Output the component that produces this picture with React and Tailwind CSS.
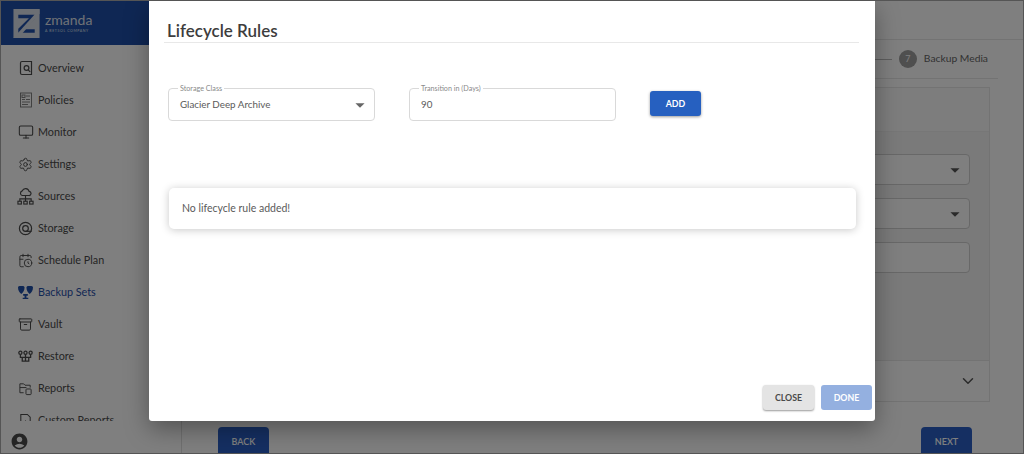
import { Monitor, Settings, CalendarClock, Archive, ChevronDown } from "lucide-react";
import { MdAccountCircle, MdArrowDropDown } from "react-icons/md";

const FONT = "font-['Lato','Noto_Sans',sans-serif]";

function OverviewIcon() {
  return (
    <svg viewBox="0 0 16 16" className="h-[16px] w-[16px]" fill="none" stroke="currentColor" strokeWidth="1.2">
      <path d="M4 1.500h9.500v13H4a1.500 1.500 0 0 1-1.500-1.500V3A1.500 1.500 0 0 1 4 1.500z" />
      <circle cx="8.500" cy="8" r="2.400" />
      <path d="M10.200 9.800l2 2" />
    </svg>
  );
}

function PoliciesIcon() {
  return (
    <svg viewBox="0 0 16 16" className="h-[16px] w-[16px] text-[#777]" fill="none" stroke="currentColor" strokeWidth="0.9">
      <rect x="2.500" y="1" width="11" height="14" />
      <rect x="4" y="3" width="3" height="2.500" />
      <path d="M8 4h4M4 7.500h3M8 7.500h4M4 10h8M4 12.500h6" />
    </svg>
  );
}

function SourcesIcon() {
  return (
    <svg viewBox="0 0 18 18" className="h-[17px] w-[17px]" fill="none" stroke="currentColor" strokeWidth="1.200">
      <path d="M5.500 8h7a2.200 2.200 0 0 0 .3-4.400A3.800 3.800 0 0 0 5.600 3 2.600 2.600 0 0 0 5.500 8z" />
      <path d="M9 8v3M3 14v-2.500h12V14M9 11v3" />
      <rect x="1" y="14" width="3.600" height="3" />
      <rect x="7.200" y="14" width="3.600" height="3" />
      <rect x="13.400" y="14" width="3.600" height="3" />
    </svg>
  );
}

function StorageIcon() {
  return (
    <svg viewBox="0 0 16 16" className="h-[15px] w-[15px]" fill="none" stroke="currentColor" strokeWidth="1.300">
      <circle cx="8" cy="8" r="6.500" />
      <circle cx="8" cy="8" r="3" />
      <path d="M8 11h6.500" />
    </svg>
  );
}

function BackupIcon() {
  return (
    <svg viewBox="0 0 18 16" className="h-[15px] w-[17px]" fill="currentColor">
      <path d="M1 2.500A2 2 0 0 1 3 1h3a2 2 0 0 1 2 1.500C8 6 6.500 8 4.500 9.500 2.500 8 1 6 1 2.500z" />
      <path d="M10 2.500A2 2 0 0 1 12 1h3a2 2 0 0 1 2 1.500c0 3.500-1.500 5.500-3.500 7C11.500 8 10 6 10 2.500z" />
      <path d="M6.500 9.500h5v2h-1.500v2h2v1.500h-6v-1.500h2v-2h-1.500z" />
    </svg>
  );
}

function RestoreIcon() {
  return (
    <svg viewBox="0 0 18 14" className="h-[13px] w-[17px]" fill="none" stroke="currentColor" strokeWidth="1.400">
      <circle cx="3.500" cy="3" r="1.700" />
      <circle cx="9" cy="3" r="1.700" />
      <circle cx="14.500" cy="3" r="1.700" />
      <path d="M3.500 5v3h11V5M9 5v7M5.500 8v4h7V8" />
    </svg>
  );
}

function ReportsIcon() {
  return (
    <svg viewBox="0 0 16 16" className="h-[15px] w-[15px]" fill="none" stroke="currentColor" strokeWidth="1">
      <path d="M6 12.500H2V3h4l1.500 1.500H13V7" />
      <path d="M2 7h7" />
      <rect x="8.500" y="8.500" width="5.500" height="6" rx="0.800" />
    </svg>
  );
}

function CustomReportsIcon() {
  return (
    <svg viewBox="0 0 16 16" className="h-[15px] w-[15px]" fill="none" stroke="currentColor" strokeWidth="1.100">
      <path d="M3 14.500V1.500h7l3 3v10z" />
      <path d="M8 8v3M6.500 9.500h3" />
    </svg>
  );
}

const NAV = [
  { label: "Overview", icon: <OverviewIcon /> },
  { label: "Policies", icon: <PoliciesIcon /> },
  { label: "Monitor", icon: <Monitor size={16} strokeWidth={1.6} /> },
  { label: "Settings", icon: <Settings size={15} strokeWidth={1.5} /> },
  { label: "Sources", icon: <SourcesIcon /> },
  { label: "Storage", icon: <StorageIcon /> },
  { label: "Schedule Plan", icon: <CalendarClock size={15} strokeWidth={1.5} /> },
  { label: "Backup Sets", icon: <BackupIcon />, active: true },
  { label: "Vault", icon: <Archive size={15} strokeWidth={1.6} /> },
  { label: "Restore", icon: <RestoreIcon /> },
  { label: "Reports", icon: <ReportsIcon /> },
  { label: "Custom Reports", icon: <CustomReportsIcon /> },
];

function Logo() {
  return (
    <div className="flex items-center gap-[5px]">
      <svg viewBox="0 0 27 30" className="h-[29px] w-[27px]">
        <path d="M0 0h27v30H0z" fill="#d9dee8" />
        <path d="M5 6h17v4L11 21h11v3.500H5v-4l11-11H5z" fill="#1f4ea8" />
        <path d="M0 30L27 0v5L5 30z" fill="#d9dee8" />
      </svg>
      <div className="flex flex-col text-[#dfe3ec]">
        <span className="text-[14px] leading-[16px]">zmanda</span>
        <span className="text-[3.500px] leading-[6px] tracking-[0.6px]">A BETSOL COMPANY</span>
      </div>
    </div>
  );
}

function Sidebar() {
  return (
    <aside className="flex h-full w-[181px] shrink-0 flex-col border-r border-[#e0e0e0] bg-white">
      <div className="flex h-[44px] shrink-0 items-center bg-[#1f4ea8] pl-[12px]">
        <Logo />
      </div>
      <nav className="flex h-[376px] flex-col overflow-hidden pt-[7px]">
        {NAV.map((item) => (
          <div
            key={item.label}
            className={`flex h-[32px] shrink-0 items-center ${item.active ? "text-[#1f4ea8]" : "text-[#4a4a4a]"}`}
          >
            <span className="flex w-[37px] shrink-0 justify-center pl-[12px]">{item.icon}</span>
            <span className="text-[10.800px]">{item.label}</span>
          </div>
        ))}
      </nav>
      <div className="flex flex-1 items-start pt-[11px] pl-[9px] text-[#4a4a4a]">
        <MdAccountCircle size={19} />
      </div>
    </aside>
  );
}

function BackgroundField({ arrow }) {
  return (
    <div className="flex h-[31px] items-center justify-end rounded border border-[#d0d0d0] bg-white pr-[3px] text-[#555]">
      {arrow && <MdArrowDropDown size={22} />}
    </div>
  );
}

function Background() {
  return (
    <main className="flex h-full min-w-0 flex-1 flex-col bg-white">
      <div className="h-[39px] shrink-0 border-b border-[#e6e6e6]" />
      <div className="mr-[25px] flex h-[39px] shrink-0 items-center justify-end border-b border-[#e6e6e6] pr-[10px]">
        <span className="h-px w-[20px] bg-[#bbb]" />
        <span className="mx-[7px] flex h-[18px] w-[18px] items-center justify-center rounded-full bg-[#9e9e9e] text-[9px] text-white">7</span>
        <span className="text-[10.300px] text-[#666]">Backup Media</span>
      </div>
      <div className="mr-[33px] ml-[12px] mt-[8px] flex h-[315px] shrink-0 flex-col border border-[#e6e6e6]">
        <div className="h-[44px] shrink-0 border-b border-[#eee] bg-[#fafafa]" />
        <div className="flex flex-1 flex-col gap-[13px] bg-[#f5f5f5] pt-[22px] pr-[19px] pl-[12px]">
          <BackgroundField arrow />
          <BackgroundField arrow />
          <BackgroundField />
        </div>
        <div className="flex h-[41px] shrink-0 items-center justify-end border-t border-[#e6e6e6] bg-white pr-[12px] text-[#555]">
          <ChevronDown size={18} strokeWidth={2} />
        </div>
      </div>
      <div className="flex flex-1 items-start justify-between pt-[25px] pr-[51px] pl-[36px]">
        <button type="button" className="h-[30px] w-[51px] rounded bg-[#2a5fc4] text-[9px] font-semibold text-white">BACK</button>
        <button type="button" className="h-[30px] w-[51px] rounded bg-[#2a5fc4] text-[9px] font-semibold text-white">NEXT</button>
      </div>
    </main>
  );
}

function Outlined({ label, children }) {
  return (
    <div className="relative flex h-[33px] w-[207px] items-center rounded border border-[#d9d9d9] pl-[11px] text-[9.800px] text-[#5a5a5a]">
      <span className="absolute -top-[5px] left-[9px] bg-white px-[2px] text-[7.200px] leading-[9px] text-[#8a8a8a]">{label}</span>
      {children}
    </div>
  );
}

function LifecycleModal() {
  return (
    <div className="absolute inset-0 flex items-start justify-center bg-black/50">
      <div className="flex h-[420px] w-[726px] flex-col rounded-b-[3px] bg-white pt-[21px] pr-[3px] shadow-[0_8px_24px_rgba(0,0,0,0.35)]">
        <h2 className="mr-[13px] ml-[15px] h-[21px] border-b border-[#e8e8e8] pl-[3px] text-[17px] leading-[17px] font-semibold text-[#3d3d3d]">
          Lifecycle Rules
        </h2>
        <div className="mt-[45px] ml-[19px] flex items-center">
          <Outlined label="Storage Class">
            <span className="flex-1">Glacier Deep Archive</span>
            <MdArrowDropDown size={22} className="mr-[3px] text-[#666]" />
          </Outlined>
          <div className="ml-[34px]">
            <Outlined label="Transition in (Days)">
              <span>90</span>
            </Outlined>
          </div>
          <button
            type="button"
            className="mb-[2px] ml-[34px] h-[25px] w-[51px] rounded-[3px] bg-[#2660c0] text-[8.800px] font-bold text-white shadow-[0_1px_3px_rgba(0,0,0,0.4)]"
          >
            ADD
          </button>
        </div>
        <div className="mt-[67px] mr-[16px] ml-[20px] flex h-[41px] items-center rounded-[5px] bg-white pl-[13px] text-[10.500px] text-[#5a5a5a] shadow-[0_1px_8px_rgba(0,0,0,0.22)]">
          No lifecycle rule added!
        </div>
        <div className="mt-auto mb-[11px] flex justify-end gap-[7px]">
          <button
            type="button"
            className="h-[25px] w-[51px] rounded-[3px] bg-[#e4e4e4] text-[8.800px] font-bold text-[#4a4a4a] shadow-[0_1px_2px_rgba(0,0,0,0.4)]"
          >
            CLOSE
          </button>
          <button type="button" className="h-[25px] w-[51px] rounded-[3px] bg-[#94b0e0] text-[8.800px] font-bold text-white">
            DONE
          </button>
        </div>
      </div>
    </div>
  );
}

export default function App() {
  return (
    <div className={`relative flex h-[454px] w-[1024px] overflow-hidden border border-[#555] ${FONT}`}>
      <Sidebar />
      <Background />
      <LifecycleModal />
    </div>
  );
}
